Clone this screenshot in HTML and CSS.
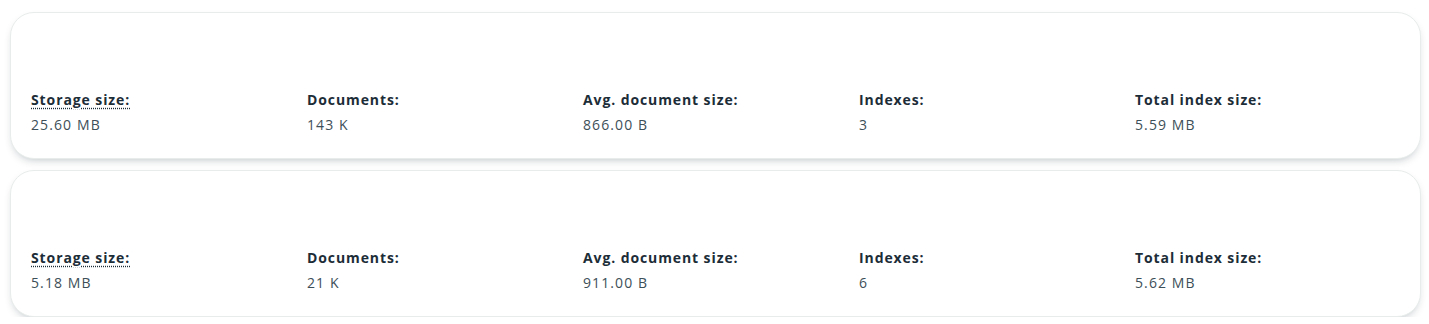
FILE: index.html
```html
<!DOCTYPE html>
<html lang="en">
<head>
<meta charset="UTF-8">
<meta name="viewport" content="width=device-width, initial-scale=1.0">
<title>Collection Stats</title>
<link rel="stylesheet" href="styles.css">
</head>
<body>
<div class="list">
<!-- first collection -->
<div class="card">
<div class="card-head"></div>
<div class="stats">
<div class="stat">
<span class="stat-label hint">Storage size:</span>
<span class="stat-value">25.60 MB</span>
</div>
<div class="stat">
<span class="stat-label">Documents:</span>
<span class="stat-value">143 K</span>
</div>
<div class="stat">
<span class="stat-label">Avg. document size:</span>
<span class="stat-value">866.00 B</span>
</div>
<div class="stat">
<span class="stat-label">Indexes:</span>
<span class="stat-value">3</span>
</div>
<div class="stat">
<span class="stat-label">Total index size:</span>
<span class="stat-value">5.59 MB</span>
</div>
</div>
</div>
<!-- second collection -->
<div class="card">
<div class="card-head"></div>
<div class="stats">
<div class="stat">
<span class="stat-label hint">Storage size:</span>
<span class="stat-value">5.18 MB</span>
</div>
<div class="stat">
<span class="stat-label">Documents:</span>
<span class="stat-value">21 K</span>
</div>
<div class="stat">
<span class="stat-label">Avg. document size:</span>
<span class="stat-value">911.00 B</span>
</div>
<div class="stat">
<span class="stat-label">Indexes:</span>
<span class="stat-value">6</span>
</div>
<div class="stat">
<span class="stat-label">Total index size:</span>
<span class="stat-value">5.62 MB</span>
</div>
</div>
</div>
</div>
</body>
</html>
```

FILE: styles.css
```css
body {
font-family: 'Open Sans', sans-serif;
background-color: #fff;
margin: 0;
padding: 0;
}
.list {
display: flex;
flex-direction: column;
gap: 11px;
padding: 12px 8px 0 10px;
}
.card {
height: 147px;
box-sizing: border-box;
padding: 0 0 0 20px;
background-color: #fff;
border: 1px solid #e8edeb;
border-radius: 24px;
box-shadow: 0 4px 10px -4px rgba(0, 30, 43, 0.3);
display: flex;
flex-direction: column;
}
.card-head {
height: 77px;
}
.stats {
display: grid;
grid-template-columns: repeat(5, 276px);
}
.stat {
display: flex;
flex-direction: column;
gap: 5px;
}
.stat-label {
font-size: 14px;
line-height: 20px;
font-weight: 700;
letter-spacing: 0.9px;
color: #1c2d38;
}
.stat-label.hint {
align-self: flex-start;
text-decoration: underline dotted;
text-underline-offset: 3px;
}
.stat-value {
font-size: 14px;
line-height: 20px;
letter-spacing: 1.1px;
color: #3d4f58;
}
```
